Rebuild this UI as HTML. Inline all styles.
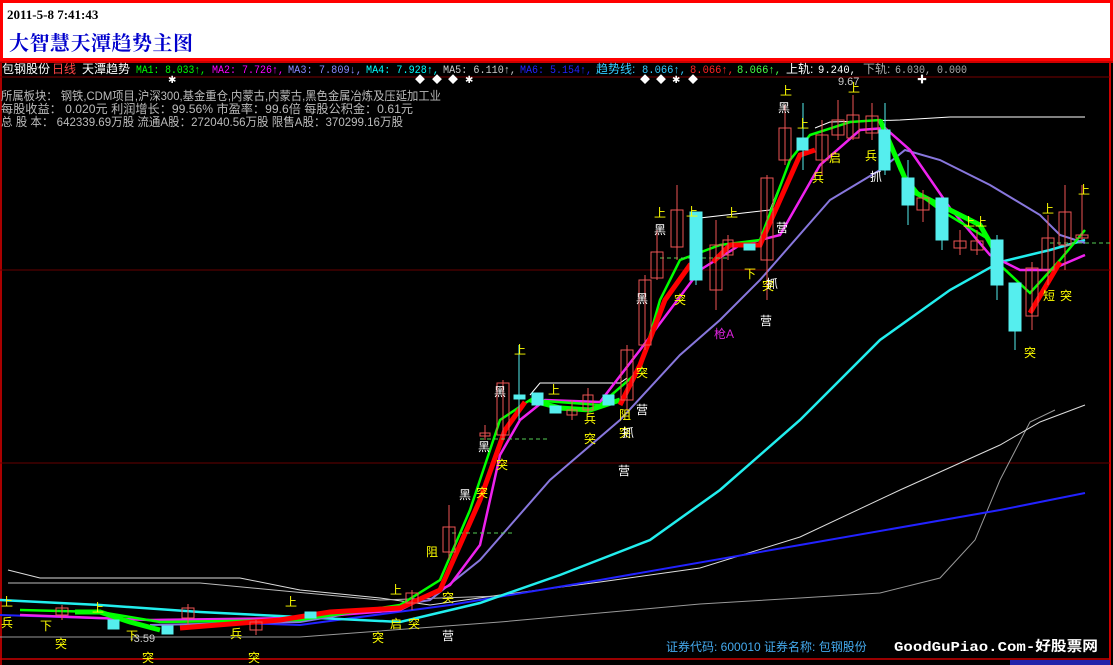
<!DOCTYPE html>
<html><head><meta charset="utf-8">
<style>
html,body{margin:0;padding:0;width:1113px;height:665px;overflow:hidden;background:#000;}
#hd{position:absolute;left:0;top:0;width:1107px;height:55px;background:#fff;border:3px solid #f00;}
#hd .d{position:absolute;left:4px;top:4px;font:bold 13px "Liberation Serif","Noto Serif CJK SC",serif;color:#000;}
#hd .t{position:absolute;left:6px;top:24px;font:bold 20px "Noto Serif CJK SC","WenQuanYi Zen Hei",serif;color:#00c;letter-spacing:0.5px;}
svg{position:absolute;left:0;top:0;}
text{font-family:"Liberation Sans","Noto Sans CJK SC",sans-serif;}
.m{font-family:"Liberation Mono","Noto Sans CJK SC",monospace;font-size:11px;}
</style></head><body>
<div id="hd"><div class="d">2011-5-8 7:41:43</div><div class="t">大智慧天潭趋势主图</div></div>
<svg width="1113" height="665" viewBox="0 0 1113 665">
<rect x="0" y="61" width="1113" height="604" fill="#000"/>
<line x1="0" y1="62" x2="1113" y2="62" stroke="#c00" stroke-width="2"/>
<line x1="1" y1="62" x2="1" y2="665" stroke="#a00" stroke-width="2"/>
<line x1="1110" y1="62" x2="1110" y2="665" stroke="#c00" stroke-width="2"/>
<line x1="0" y1="77" x2="1110" y2="77" stroke="#700" stroke-width="1"/>
<line x1="0" y1="270" x2="1110" y2="270" stroke="#600" stroke-width="1"/>
<line x1="0" y1="463" x2="1110" y2="463" stroke="#600" stroke-width="1"/>
<line x1="0" y1="659" x2="1110" y2="659" stroke="#c00" stroke-width="1.5"/>
<g font-size="12">
<text x="2" y="73" fill="#fff">包钢股份</text><text x="52" y="73" fill="#f44">日线</text><text x="82" y="73" fill="#fff">天潭趋势</text>
<text x="136" y="73" fill="#0f0" class="m" textLength="70" lengthAdjust="spacingAndGlyphs">MA1: 8.033↑,</text>
<text x="212" y="73" fill="#f0f" class="m" textLength="72" lengthAdjust="spacingAndGlyphs">MA2: 7.726↑,</text>
<text x="288" y="73" fill="#88f" class="m" textLength="74" lengthAdjust="spacingAndGlyphs">MA3: 7.809↓,</text>
<text x="366" y="73" fill="#0ff" class="m" textLength="73" lengthAdjust="spacingAndGlyphs">MA4: 7.928↑,</text>
<text x="443" y="73" fill="#ccc" class="m" textLength="73" lengthAdjust="spacingAndGlyphs">MA5: 6.110↑,</text>
<text x="520" y="73" fill="#22f" class="m" textLength="72" lengthAdjust="spacingAndGlyphs">MA6: 5.154↑,</text>
<text x="596" y="73" fill="#3cf">趋势线: </text><text x="642" y="73" fill="#3cf" class="m" textLength="44" lengthAdjust="spacingAndGlyphs">8.066↑,</text>
<text x="690" y="73" fill="#f22" class="m" textLength="44" lengthAdjust="spacingAndGlyphs">8.066↑,</text>
<text x="737" y="73" fill="#4f4" class="m" textLength="44" lengthAdjust="spacingAndGlyphs">8.066↑,</text>
<text x="786" y="73" fill="#fff">上轨: </text><text x="818" y="73" fill="#fff" class="m" textLength="38" lengthAdjust="spacingAndGlyphs">9.240,</text>
<text x="863" y="73" fill="#aaa">下轨: </text><text x="895" y="73" fill="#aaa" class="m" textLength="72" lengthAdjust="spacingAndGlyphs">6.030, 0.000</text>
<text x="1" y="100" fill="#bbb" textLength="440" lengthAdjust="spacingAndGlyphs">所属板块： 钢铁,CDM项目,沪深300,基金重仓,内蒙古,内蒙古,黑色金属冶炼及压延加工业</text>
<text x="1" y="113" fill="#bbb" textLength="412" lengthAdjust="spacingAndGlyphs">每股收益： 0.020元    利润增长：99.56%   市盈率：99.6倍   每股公积金：0.61元</text>
<text x="1" y="126" fill="#bbb" textLength="402" lengthAdjust="spacingAndGlyphs">总 股 本： 642339.69万股  流通A股：272040.56万股  限售A股：370299.16万股</text>
</g>
<g fill="#fff" font-size="10"><text x="168" y="83">✱</text><text x="415" y="83">◆</text><text x="432" y="83">◆</text><text x="448" y="83">◆</text><text x="465" y="83">✱</text><text x="640" y="83">◆</text><text x="656" y="83">◆</text><text x="672" y="83">✱</text><text x="688" y="83">◆</text><text x="917" y="83">✚</text></g>
<polyline fill="none" stroke="#fff" stroke-width="1" points="815,128 830,122 900,120 950,117 1085,117"/>
<polyline fill="none" stroke="#fff" stroke-width="1" points="690,245 700,218 770,210 780,185"/>
<polyline fill="none" stroke="#fff" stroke-width="1" points="530,395 540,383 620,383 627,378"/>
<polyline fill="none" stroke="#999" stroke-width="1" points="0,637 300,637 500,622 700,604 800,598 880,593 940,578 975,540 1000,480 1030,422 1055,410"/>
<polyline fill="none" stroke="#ddd" stroke-width="1" points="8,570 40,578 240,578 300,590 380,598 430,605 500,595 600,582 700,568 800,537 900,490 1000,445 1040,422 1085,405"/>
<polyline fill="none" stroke="#bbb" stroke-width="1" points="8,583 200,583 380,600 500,596"/>
<polyline fill="none" stroke="#22f" stroke-width="2" points="0,615 300,625 450,605 600,580 800,545 1000,510 1085,493"/>
<polyline fill="none" stroke="#2ee" stroke-width="2.5" points="0,600 100,605 200,612 400,622 480,603 560,575 650,540 720,490 800,420 880,340 950,290 1000,262 1050,250 1085,240"/>
<polyline fill="none" stroke="#87d" stroke-width="2" points="150,625 300,622 430,600 480,560 550,480 620,420 680,355 720,320 760,280 830,200 880,170 905,150 940,160 990,185 1040,215 1060,235 1085,243"/>
<polyline fill="none" stroke="#e2e" stroke-width="2.5" points="20,615 150,620 300,618 400,610 450,585 480,545 500,455 520,420 545,400 600,402 640,350 700,270 740,245 780,235 820,165 860,130 885,128 910,150 950,208 990,255 1020,270 1050,270 1085,255"/>
<polyline fill="none" stroke="#0f0" stroke-width="2.5" points="20,610 100,612 160,622 300,620 400,605 440,580 470,510 500,420 530,400 600,405 640,370 660,300 680,260 720,245 760,240 790,160 810,135 850,122 880,120 900,170 920,195 940,210 990,240 1000,265 1030,293 1060,260 1085,230"/>
<polyline fill="none" stroke="#0f0" stroke-width="5" points="75,612 100,612 130,622 160,630"/>
<polyline fill="none" stroke="#0f0" stroke-width="5" points="530,400 560,408 590,410 620,400"/>
<polyline fill="none" stroke="#0f0" stroke-width="5" points="880,120 910,190 930,200 960,215 980,225 1000,260"/>
<polyline fill="none" stroke="#f00" stroke-width="5" points="180,628 280,620 330,612 400,608 440,590 480,500 505,430 525,402"/>
<polyline fill="none" stroke="#f00" stroke-width="5" points="620,405 640,365 665,300 690,265 700,260"/>
<polyline fill="none" stroke="#f00" stroke-width="5" points="713,262 730,245 760,245 780,200 800,155 815,150"/>
<polyline fill="none" stroke="#f00" stroke-width="5" points="1030,313 1060,262"/>
<g stroke="#5c5" stroke-dasharray="4,3" fill="none"><line x1="480" y1="439" x2="550" y2="439"/><line x1="452" y1="533" x2="515" y2="533"/><line x1="660" y1="258" x2="730" y2="258"/><line x1="1050" y1="243" x2="1110" y2="243"/></g>
<g stroke="#e55" fill="none" stroke-width="1">
<path d="M449,505V560M443,527h12v25h-12z"/><path d="M485,425V440M480,433h10v3h-10z"/>
<path d="M503,380V440M497,383h12v52h-12z"/><path d="M572,400V420M567,410h10v5h-10z"/><path d="M588,388V415M583,395h10v15h-10z"/>
<path d="M627,345V410M621,350h12v50h-12z"/><path d="M645,275V350M639,280h12v65h-12z"/><path d="M657,230V280M651,252h12v26h-12z"/>
<path d="M677,185V260M671,210h12v37h-12z"/><path d="M716,220V310M710,245h12v45h-12z"/><path d="M728,235V260M723,240h10v15h-10z"/>
<path d="M767,175V300M761,178h12v82h-12z"/><path d="M785,105V165M779,128h12v32h-12z"/><path d="M822,120V175M816,135h12v25h-12z"/>
<path d="M838,100V140M832,120h12v15h-12z"/><path d="M853,95V140M847,115h12v23h-12z"/><path d="M872,103V140M866,116h12v17h-12z"/>
<path d="M923,190V222M917,198h12v12h-12z"/><path d="M960,230V255M954,241h12v7h-12z"/><path d="M977,230V255M971,241h12v9h-12z"/>
<path d="M1032,262V330M1026,268h12v48h-12z"/><path d="M1048,215V285M1042,238h12v32h-12z"/><path d="M1065,185V270M1059,212h12v33h-12z"/><path d="M1082,185V240M1076,235h12v3h-12z"/>
<path d="M62,605V620M56,608h12v7h-12z"/><path d="M188,604V625M182,608h12v10h-12z"/><path d="M412,590V610M406,593h12v10h-12z"/><path d="M256,620V635M250,622h12v8h-12z"/>
</g>
<g fill="#5ee" stroke="#5ee">
<path d="M519,345V420" fill="none"/><rect x="514" y="395" width="11" height="4"/><rect x="532" y="393" width="11" height="12"/><rect x="550" y="406" width="11" height="7"/>
<rect x="603" y="395" width="11" height="10"/><path d="M696,212V285" fill="none"/><rect x="690" y="212" width="12" height="68"/><rect x="744" y="244" width="11" height="6"/>
<path d="M803,103V170" fill="none"/><rect x="797" y="138" width="11" height="12"/><path d="M885,103V175" fill="none"/><rect x="879" y="130" width="11" height="40"/>
<path d="M908,160V225" fill="none"/><rect x="902" y="178" width="12" height="27"/><path d="M942,198V250" fill="none"/><rect x="936" y="198" width="12" height="42"/>
<path d="M997,235V300" fill="none"/><rect x="991" y="240" width="12" height="45"/><path d="M1015,283V350" fill="none"/><rect x="1009" y="283" width="12" height="48"/>
<rect x="108" y="620" width="11" height="9"/><rect x="162" y="626" width="11" height="8"/><rect x="305" y="612" width="11" height="6"/>
</g>
<g font-size="12" fill="#ff0">
<text x="1" y="606">上</text><text x="1" y="627">兵</text><text x="55" y="648">突</text><text x="142" y="662">突</text><text x="230" y="638">兵</text><text x="248" y="662">突</text>
<text x="285" y="606">上</text><text x="372" y="642">突</text><text x="390" y="594">上</text><text x="390" y="628">启</text><text x="408" y="628">突</text><text x="442" y="602">突</text>
<text x="426" y="556">阻</text><text x="476" y="497">突</text><text x="496" y="469">突</text><text x="514" y="354">上</text><text x="548" y="394">上</text><text x="584" y="423">兵</text><text x="584" y="443">突</text>
<text x="619" y="419">阻</text><text x="619" y="437">突</text><text x="636" y="377">突</text><text x="654" y="217">上</text><text x="674" y="304">突</text><text x="686" y="216">上</text><text x="726" y="217">上</text>
<text x="744" y="278">下</text><text x="762" y="290">突</text><text x="780" y="95">上</text><text x="797" y="128">上</text><text x="829" y="162">启</text><text x="812" y="182">兵</text><text x="848" y="92">上</text><text x="865" y="160">兵</text>
<text x="963" y="226">上</text><text x="975" y="226">上</text><text x="1024" y="357">突</text><text x="1042" y="213">上</text><text x="1043" y="300">短</text><text x="1060" y="300">突</text><text x="1078" y="194">上</text><text x="92" y="612">上</text><text x="40" y="630">下</text><text x="126" y="640">下</text>
</g>
<g font-size="12" fill="#fff">
<text x="654" y="234">黑</text><text x="636" y="303">黑</text><text x="778" y="112">黑</text><text x="494" y="396">黑</text><text x="478" y="451">黑</text><text x="459" y="499">黑</text>
<text x="776" y="232">营</text><text x="760" y="325">营</text><text x="636" y="414">营</text><text x="618" y="475">营</text><text x="442" y="640">营</text><text x="766" y="288">抓</text><text x="622" y="437">抓</text><text x="870" y="181">抓</text>
</g>
<text x="714" y="338" font-size="12" fill="#d2d">枪A</text>
<text x="838" y="85" font-size="11" fill="#ccc">9.67</text>
<text x="130" y="642" font-size="11" fill="#ccc">-3.59</text>
<text x="666" y="651" font-size="12" fill="#4ae">证券代码: 600010 证券名称: 包钢股份</text>
<text x="894" y="651" font-size="14" fill="#fff" style="font-family:'Liberation Mono','Noto Sans CJK SC',monospace;font-weight:bold" textLength="204" lengthAdjust="spacingAndGlyphs">GoodGuPiao.Com-好股票网</text>
<rect x="1010" y="660" width="100" height="5" fill="#22a"/>
</svg>
</body></html>
